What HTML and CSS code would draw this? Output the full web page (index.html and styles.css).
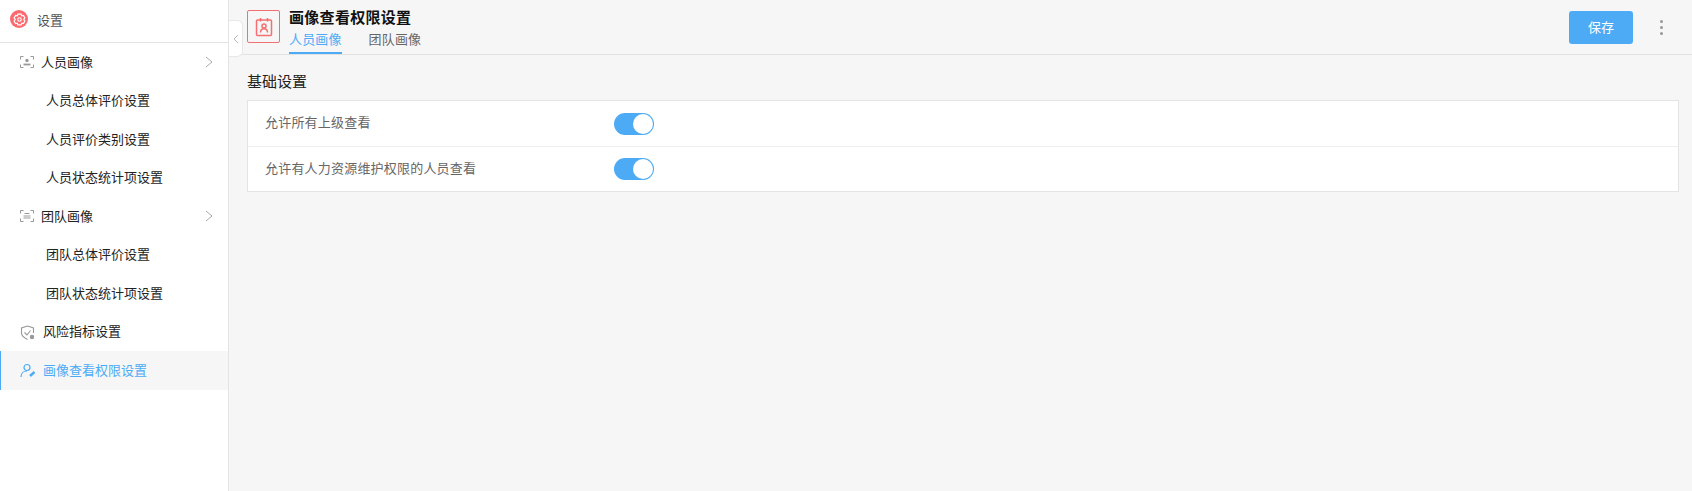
FILE: index.html
```html
<!DOCTYPE html>
<html lang="zh-CN">
<head>
    <meta charset="UTF-8">
    <meta name="viewport" content="width=device-width, initial-scale=1.0">
    <title>画像查看权限设置</title>
    <link rel="stylesheet" href="styles.css">
</head>
<body>
    <aside class="sidebar">
        <div class="side-head">
            <span class="side-logo">
                <svg width="13" height="13" viewBox="0 0 12 12" fill="none" stroke="#fff" stroke-width="1.1"><path d="M4.5 1h3l.5 1.6 1.6-.4 1.4 2.4-1.1 1.4 1.1 1.4-1.4 2.4-1.6-.4-.5 1.6h-3L4 9.4l-1.6.4L1 7.4 2.1 6 1 4.6l1.4-2.4 1.600.4z"/><circle cx="6" cy="6" r="1.6"/></svg>
            </span>
            <span>设置</span>
        </div>
        <ul class="side-menu">
            <li class="group">
                <svg class="ico" width="14" height="12" viewBox="0 0 14 12" fill="none" stroke="#999"><path d="M.5 3.5v-3h3M10.500.5h3v3M13.500 8.500v3h-3M3.500 11.500h-3v-3"/><circle cx="7" cy="4.500" r="1.700" fill="#999" stroke="none"/><path d="M3.500 8.500h7" stroke-width="1.800"/></svg>
                <span>人员画像</span>
                <svg class="arrow" width="8" height="12" viewBox="0 0 8 12" fill="none" stroke="#aaa"><path d="M1 1l6 5-6 5"/></svg>
            </li>
            <li class="sub">人员总体评价设置</li>
            <li class="sub">人员评价类别设置</li>
            <li class="sub">人员状态统计项设置</li>
            <li class="group">
                <svg class="ico" width="14" height="12" viewBox="0 0 14 12" fill="none" stroke="#999"><path d="M.5 3.500v-3h3M10.500.5h3v3M13.500 8.500v3h-3M3.500 11.500h-3v-3"/><path d="M4.500 3.500h5M3.500 6h7M3.500 8h7"/></svg>
                <span>团队画像</span>
                <svg class="arrow" width="8" height="12" viewBox="0 0 8 12" fill="none" stroke="#aaa"><path d="M1 1l6 5-6 5"/></svg>
            </li>
            <li class="sub">团队总体评价设置</li>
            <li class="sub">团队状态统计项设置</li>
            <li class="plain">
                <svg width="16" height="16" viewBox="0 0 16 16" fill="none" stroke="#999" stroke-width="1.100"><path d="M7.500 1l6 2v5M7.500 1l-6 2v5c0 3 3 5 6 6.500"/><path d="M4.500 7.500L7 10l3.500-4.500"/><circle cx="12" cy="12" r="2.800" fill="#999" stroke="#fff"/></svg>
                <span>风险指标设置</span>
            </li>
            <li class="plain active">
                <svg width="16" height="16" viewBox="0 0 16 16" fill="none" stroke="#4dabf5" stroke-width="1.200"><circle cx="7" cy="4.500" r="3"/><path d="M1 14c0-3.500 2.500-6 6-6"/><path d="M10 13l4.500-4" stroke-width="2.400"/></svg>
                <span>画像查看权限设置</span>
            </li>
        </ul>
    </aside>
    <main class="content">
        <div class="collapse">
            <svg width="6" height="10" viewBox="0 0 6 10" fill="none" stroke="#bbb"><path d="M5 1L1 5l4 4"/></svg>
        </div>
        <header class="top">
            <div class="top-icon">
                <svg width="18" height="20" viewBox="0 0 18 20" fill="none" stroke="#f36f72" stroke-width="1.500"><rect x="1.500" y="3" width="15" height="15.500" rx="1"/><path d="M5.500 1v3.500M12.500 1v3.500"/><circle cx="9" cy="9" r="2"/><path d="M5.500 15.500c0-5 7-5 7 0"/></svg>
            </div>
            <div class="top-text">
                <h1>画像查看权限设置</h1>
                <div class="tabs">
                    <a class="tab on">人员画像</a>
                    <a class="tab">团队画像</a>
                </div>
            </div>
            <button class="save">保存</button>
            <div class="more"><i></i><i></i><i></i></div>
        </header>
        <section class="body">
            <h2>基础设置</h2>
            <div class="card">
                <div class="row">
                    <span class="label">允许所有上级查看</span>
                    <span class="switch"></span>
                </div>
                <div class="row">
                    <span class="label">允许有人力资源维护权限的人员查看</span>
                    <span class="switch"></span>
                </div>
            </div>
        </section>
    </main>
</body>
</html>
```

FILE: styles.css
```css
* {
    box-sizing: border-box;
}

body {
    font-family: "Noto Sans CJK SC", "Liberation Sans", sans-serif;
    font-size: 13px;
    color: #222;
    margin: 0;
    height: 100vh;
    display: flex;
    overflow: hidden;
}

.sidebar {
    width: 229px;
    flex-shrink: 0;
    background-color: #fff;
    border-right: 1px solid #e4e4e4;
}

.side-head {
    height: 43px;
    display: flex;
    align-items: center;
    gap: 9px;
    padding: 0 0 4px 10px;
    color: #555;
    border-bottom: 1px solid #e4e4e4;
}

.side-logo {
    width: 18px;
    height: 18px;
    border-radius: 50%;
    background-color: #fb6a6e;
    display: flex;
    align-items: center;
    justify-content: center;
}

.side-menu {
    list-style-type: none;
    margin: 0;
    padding: 0;
}

.side-menu li {
    height: 38.5px;
    display: flex;
    align-items: center;
}

.side-menu li span {
    margin-top: -2px;
}

.group {
    padding: 0 15px 0 20px;
}

.group .ico {
    margin-right: 7px;
}

.group .arrow {
    margin-left: auto;
}

.side-menu .sub {
    padding: 0 0 2px 46px;
}

.plain {
    padding-left: 20px;
    gap: 7px;
}

.plain svg {
    margin-top: 2px;
}

.active {
    background-color: #f6f6f6;
    color: #4dabf5;
    border-left: 1px solid #4dabf5;
    padding-left: 19px;
}

.content {
    flex: 1;
    position: relative;
    background-color: #f6f6f6;
}

.collapse {
    position: absolute;
    left: 0;
    top: 20px;
    width: 14px;
    height: 37px;
    background-color: #fff;
    border: 1px solid #e8e8e8;
    border-left: none;
    border-radius: 0 6px 6px 0;
    display: flex;
    align-items: center;
    justify-content: center;
}

.top {
    height: 55px;
    display: flex;
    align-items: flex-start;
    padding: 10px 0 0 18px;
    border-bottom: 1px solid #e2e2e2;
}

.top-icon {
    width: 33px;
    height: 33px;
    border: 1px solid #f36f72;
    border-radius: 2px;
    display: flex;
    align-items: center;
    justify-content: center;
}

.top-text {
    margin-left: 9px;
    flex: 1;
}

h1 {
    font-size: 15px;
    font-weight: 700;
    line-height: 15px;
    letter-spacing: 0.3px;
    color: #111;
    margin: -1px 0 0;
}

.tabs {
    display: flex;
    gap: 27px;
    margin-top: 4px;
}

.tab {
    height: 26px;
    line-height: 22px;
    letter-spacing: 0.15px;
    color: #666;
}

.tab.on {
    color: #4dabf5;
    border-bottom: 2px solid #4dabf5;
}

.save {
    width: 64px;
    height: 33px;
    margin-top: 1px;
    padding: 0 0 3px;
    border: none;
    border-radius: 3px;
    background-color: #4dabf5;
    color: #fff;
    font-family: inherit;
    font-size: 13px;
}

.more {
    width: 4px;
    margin: 10px 28px 0 27px;
    display: flex;
    flex-direction: column;
    gap: 3px;
}

.more i {
    width: 3px;
    height: 3px;
    border-radius: 50%;
    background-color: #999;
}

.body {
    padding: 0 13px 0 18px;
}

h2 {
    font-size: 15px;
    font-weight: 400;
    line-height: 20px;
    color: #222;
    margin: 16px 0 9px;
}

.card {
    background-color: #fff;
    border: 1px solid #e4e4e4;
}

.row {
    height: 45px;
    display: flex;
    align-items: center;
    padding-left: 17px;
}

.row + .row {
    border-top: 1px solid #eee;
}

.label {
    width: 349px;
    margin-top: -4px;
    letter-spacing: 0.2px;
    color: #666;
}

.switch {
    width: 40px;
    height: 22px;
    border-radius: 11px;
    background-color: #4dabf5;
    position: relative;
}

.switch::after {
    content: "";
    position: absolute;
    right: 1px;
    top: 1px;
    width: 20px;
    height: 20px;
    border-radius: 50%;
    background-color: #fff;
}
```
